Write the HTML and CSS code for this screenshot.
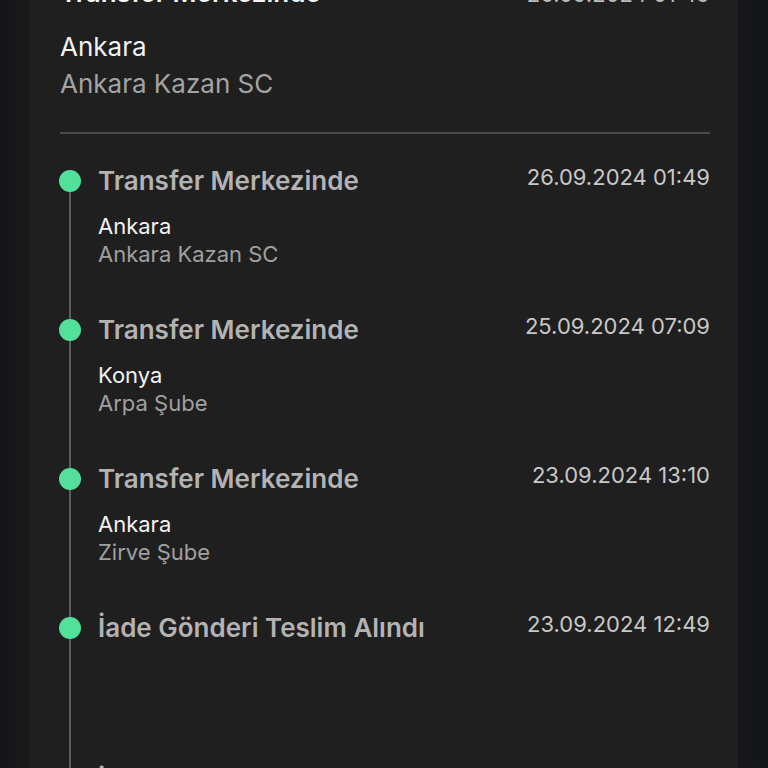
FILE: index.html
```html
<!DOCTYPE html>
<html lang="tr">
<head>
    <meta charset="UTF-8">
    <meta name="viewport" content="width=device-width, initial-scale=1.0">
    <title>Gönderi Takibi</title>
    <link rel="stylesheet" href="styles.css">
</head>
<body>

    <div class="card">
        <!-- Current status -->
        <div class="current">
            <div class="current-head">
                <h2 class="current-title">Transfer Merkezinde</h2>
                <span class="current-date">26.09.2024 01:49</span>
            </div>
            <p class="current-city">Ankara</p>
            <p class="current-branch">Ankara Kazan SC</p>
        </div>

        <!-- History -->
        <ul class="timeline">
            <li class="event">
                <div class="event-head">
                    <span class="event-title">Transfer Merkezinde</span>
                    <span class="event-date">26.09.2024 01:49</span>
                </div>
                <p class="event-city">Ankara</p>
                <p class="event-branch">Ankara Kazan SC</p>
            </li>
            <li class="event">
                <div class="event-head">
                    <span class="event-title">Transfer Merkezinde</span>
                    <span class="event-date">25.09.2024 07:09</span>
                </div>
                <p class="event-city">Konya</p>
                <p class="event-branch">Arpa Şube</p>
            </li>
            <li class="event">
                <div class="event-head">
                    <span class="event-title">Transfer Merkezinde</span>
                    <span class="event-date">23.09.2024 13:10</span>
                </div>
                <p class="event-city">Ankara</p>
                <p class="event-branch">Zirve Şube</p>
            </li>
            <li class="event event-empty">
                <div class="event-head">
                    <span class="event-title">İade Gönderi Teslim Alındı</span>
                    <span class="event-date">23.09.2024 12:49</span>
                </div>
            </li>
            <li class="event">
                <div class="event-head">
                    <span class="event-title">İade Talebi Oluşturuldu</span>
                    <span class="event-date">23.09.2024 09:49</span>
                </div>
            </li>
        </ul>
    </div>

</body>
</html>
```

FILE: styles.css
```css
body {
    margin: 0;
    height: 768px;
    overflow: hidden;
    background: linear-gradient(90deg, #141518 0%, #19191b 24px, #151619 100%);
    font-family: Inter, "Noto Sans", sans-serif;
}

.card {
    margin: -24px 0 0 30px;
    width: 650px;
    padding: 0 28px 0 30px;
    background-color: #1f1f1f;
    min-height: 900px;
}

/* current status block */
.current {
    padding-bottom: 30px;
    border-bottom: 2px solid #4a4a4a;
}

.current-head {
    display: flex;
    justify-content: space-between;
    align-items: flex-start;
    height: 34px;
}

.current-title {
    margin: 0;
    font-size: 26px;
    font-weight: 600;
    line-height: 34px;
    color: #f5f5f5;
}

.current-date {
    font-size: 22px;
    line-height: 36px;
    color: #bdbdbd;
}

.current-city {
    margin: 18px 0 0;
    font-size: 26px;
    line-height: 37px;
    color: #f2f2f2;
}

.current-branch {
    margin: 0;
    font-size: 26px;
    line-height: 37px;
    color: #a3a3a3;
}

/* timeline */
.timeline {
    list-style: none;
    margin: 0;
    padding: 32px 0 0;
}

.event {
    position: relative;
    min-height: 149px;
    padding-left: 38px;
    box-sizing: border-box;
}

.event-empty {
    min-height: 153px;
}

.event::before {
    content: "";
    position: absolute;
    left: 9px;
    top: 0;
    bottom: 0;
    width: 2px;
    background-color: #5c5c5c;
}

.event:first-child::before {
    top: 16px;
}

.event::after {
    content: "";
    position: absolute;
    left: -1px;
    top: 4px;
    width: 22px;
    height: 22px;
    border-radius: 50%;
    background-color: #52e09a;
}

.event-head {
    display: flex;
    justify-content: space-between;
    align-items: flex-start;
}

.event-title {
    font-size: 26px;
    font-weight: 600;
    line-height: 30px;
    color: #b3b3b3;
}

.event-date {
    font-size: 22px;
    line-height: 22px;
    color: #c8c8c8;
}

.event-city {
    margin: 16px 0 0;
    font-size: 22px;
    line-height: 28px;
    color: #f2f2f2;
}

.event-branch {
    margin: 0;
    font-size: 22px;
    line-height: 28px;
    color: #a0a0a0;
}
```
